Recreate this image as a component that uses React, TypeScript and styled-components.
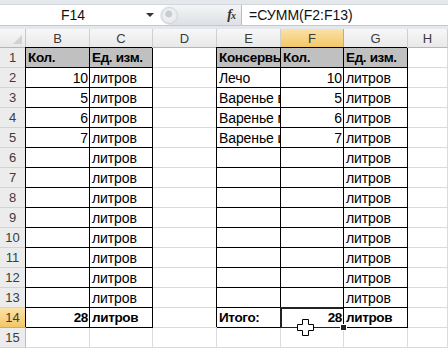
import React from "react";
import styled, { createGlobalStyle, css } from "styled-components";

const GlobalStyle = createGlobalStyle`
  html, body {
    margin: 0;
    padding: 0;
    background: #fff;
    overflow: hidden;
  }
  body {
    font-family: "Liberation Sans", Arial, sans-serif;
  }
`;

const Window = styled.div`
  width: 448px;
  height: 349px;
  overflow: hidden;
  background: #fff;
  display: flex;
  flex-direction: column;
`;

// строка формул
const FormulaBar = styled.div`
  height: 29px;
  box-sizing: border-box;
  padding: 4px 0 3px;
  background: #e4e7eb;
  display: flex;
`;

const BarInner = styled.div`
  flex: 1;
  display: flex;
  background: #fff;
  border-top: 1px solid #d3d7dc;
  border-bottom: 1px solid #c3c8ce;
`;

const NameBox = styled.div`
  width: 160px;
  display: flex;
  align-items: center;
`;

const NameText = styled.span`
  flex: 1;
  text-align: center;
  font-size: 14px;
  color: #111;
`;

const DropArrow = styled.span`
  width: 0;
  height: 0;
  margin-right: 6px;
  border-left: 4px solid transparent;
  border-right: 4px solid transparent;
  border-top: 4px solid #333;
`;

const Pill = styled.div`
  width: 82px;
  display: flex;
  align-items: center;
  justify-content: space-between;
  padding: 0 6px 0 1px;
  box-sizing: border-box;
  background: linear-gradient(#f4f5f7, #dde0e4);
  border-radius: 11px 0 0 11px;
  border-right: 1px solid #b8bdc3;
`;

const Knob = styled.span`
  width: 17px;
  height: 17px;
  border-radius: 50%;
  background: radial-gradient(circle at 45% 40%, #c9ccd0 0 3px, #eef0f2 4px, #e3e6e9 100%);
  border: 1px solid #cfd3d8;
  box-sizing: border-box;
`;

const Fx = styled.span`
  font-family: "Liberation Serif", "Times New Roman", serif;
  font-style: italic;
  font-weight: bold;
  font-size: 14px;
  color: #333;
  letter-spacing: -1px;

  small {
    font-size: 10px;
  }
`;

const FormulaText = styled.div`
  flex: 1;
  display: flex;
  align-items: center;
  padding-left: 7px;
  font-size: 14px;
  color: #111;
`;

// лист
const Sheet = styled.div`
  display: grid;
  grid-template-columns: 26px 64px 63px 64px 64px 63px 64px 1fr;
  grid-template-rows: 19px repeat(15, 20px);
`;

const Corner = styled.div`
  background: linear-gradient(#f7f7f7, #e9e9e9);
  border-right: 1px solid #c6c6c6;
  border-bottom: 1px solid #b5b5b5;
  box-sizing: border-box;
  display: flex;
  align-items: flex-end;
  justify-content: flex-end;
  padding: 0 3px 3px 0;
`;

const headActive = css`
  background: linear-gradient(#fbe2a8, #f2c767);
  border-color: #e3a93f;
`;

const ColHead = styled.div<{ $active?: boolean }>`
  box-sizing: border-box;
  display: flex;
  align-items: center;
  justify-content: center;
  font-size: 13px;
  color: #3b3b3b;
  background: linear-gradient(#f7f7f7, #e9e9e9);
  border-right: 1px solid #cfcfcf;
  border-bottom: 1px solid #b5b5b5;
  ${({ $active }) => $active && headActive}
`;

const RowHead = styled.div<{ $active?: boolean }>`
  box-sizing: border-box;
  display: flex;
  align-items: center;
  justify-content: center;
  font-size: 13px;
  color: #3b3b3b;
  background: #ececec;
  border-right: 1px solid #bcbcbc;
  border-bottom: 1px solid #d3d3d3;
  ${({ $active }) => $active && headActive}
`;

const Cell = styled.div<{
  $fill?: boolean;
  $boxed?: boolean;
  $right?: boolean;
  $bold?: boolean;
  $active?: boolean;
}>`
  position: relative;
  box-sizing: border-box;
  min-width: 0;
  border-right: 1px solid ${({ $boxed }) => ($boxed ? "#000" : "#dadada")};
  border-bottom: 1px solid ${({ $boxed }) => ($boxed ? "#000" : "#dadada")};
  background: ${({ $fill }) => ($fill ? "#c0c0c0" : "#fff")};
  box-shadow: ${({ $boxed }) => ($boxed ? "-1px -1px 0 0 #000" : "none")};
  font-size: ${({ $bold }) => ($bold ? "13.5px" : "14px")};
  letter-spacing: ${({ $bold }) => ($bold ? "-0.35px" : "-0.1px")};
  font-weight: ${({ $bold }) => ($bold ? 700 : 400)};
  color: #000;
  text-align: ${({ $right }) => ($right ? "right" : "left")};
  ${({ $active }) =>
    $active &&
    css`
      outline: 2px solid #222;
      outline-offset: -1px;
    `}
`;

const CellText = styled.div`
  overflow: hidden;
  white-space: nowrap;
  line-height: 18px;
  padding: 1px 1px 0 2px;
`;

const FillHandle = styled.span`
  position: absolute;
  z-index: 2;
  right: -4px;
  bottom: -4px;
  width: 5px;
  height: 5px;
  background: #222;
  border: 1px solid #fff;
`;

const Cursor = styled.svg`
  position: absolute;
  z-index: 3;
  left: 16px;
  top: 11px;
`;

type Val = { t?: string; bold?: boolean; fill?: boolean; right?: boolean };

const head = (t: string): Val => ({ t, bold: true, fill: true });
const num = (t: string, bold = false): Val => ({ t, right: true, bold });
const txt = (t: string, bold = false): Val => ({ t, bold });
const empty: Val = {};

const rows: Val[][] = [
  [head("Кол."), head("Ед. изм."), empty, head("Консервы"), head("Кол."), head("Ед. изм.")],
  [num("10"), txt("литров"), empty, txt("Лечо"), num("10"), txt("литров")],
  [num("5"), txt("литров"), empty, txt("Варенье вишнёвое"), num("5"), txt("литров")],
  [num("6"), txt("литров"), empty, txt("Варенье малиновое"), num("6"), txt("литров")],
  [num("7"), txt("литров"), empty, txt("Варенье из ранеток"), num("7"), txt("литров")],
  ...Array.from({ length: 8 }, () => [empty, txt("литров"), empty, empty, empty, txt("литров")]),
  [num("28", true), txt("литров", true), empty, txt("Итого:", true), num("28", true), txt("литров", true)],
];

const columns = ["B", "C", "D", "E", "F", "G", "H"];

export default function App() {
  return (
    <Window>
      <GlobalStyle />
      <FormulaBar>
        <BarInner>
          <NameBox>
            <NameText>F14</NameText>
            <DropArrow />
          </NameBox>
          <Pill>
            <Knob />
            <Fx>
              f<small>x</small>
            </Fx>
          </Pill>
          <FormulaText>=СУММ(F2:F13)</FormulaText>
        </BarInner>
      </FormulaBar>

      <Sheet>
        <Corner>
          <svg width="9" height="9" viewBox="0 0 9 9">
            <polygon points="9,0 9,9 0,9" fill="#d2d2d2" />
          </svg>
        </Corner>
        {columns.map((c) => (
          <ColHead key={c} $active={c === "F"}>
            {c}
          </ColHead>
        ))}

        {Array.from({ length: 15 }, (_, r) => {
          const n = r + 1;
          const data = rows[r];
          return (
            <React.Fragment key={n}>
              <RowHead $active={n === 14}>{n}</RowHead>
              {columns.map((c, ci) => {
                const boxed = n <= 14 && c !== "D" && c !== "H";
                const v = data && ci < 6 ? data[ci] : empty;
                const active = n === 14 && c === "F";
                return (
                  <Cell
                    key={c}
                    $boxed={boxed}
                    $fill={v.fill}
                    $bold={v.bold}
                    $right={v.right}
                    $active={active}
                  >
                    <CellText>{v.t}</CellText>
                    {active && (
                      <>
                        <FillHandle />
                        <Cursor width="17" height="17" viewBox="0 0 17 17">
                          <path
                            d="M5.5 0.5h6v5h5v6h-5v5h-6v-5h-5v-6h5z"
                            fill="#fff"
                            stroke="#000"
                            strokeWidth="1"
                          />
                        </Cursor>
                      </>
                    )}
                  </Cell>
                );
              })}
            </React.Fragment>
          );
        })}
      </Sheet>
    </Window>
  );
}
